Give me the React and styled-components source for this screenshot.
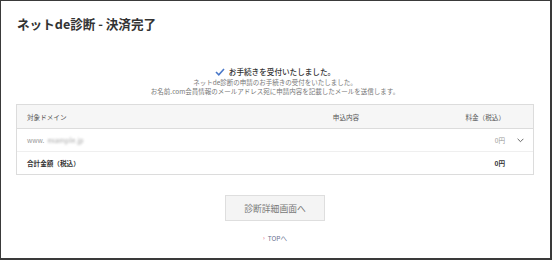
import React from "react";
import styled, { createGlobalStyle } from "styled-components";

const GlobalStyle = createGlobalStyle`
  html, body {
    margin: 0;
    padding: 0;
    background: #fff;
  }
  body {
    font-family: "Noto Sans CJK JP", "Noto Sans", sans-serif;
  }
`;

const Frame = styled.div`
  box-sizing: border-box;
  width: 552px;
  height: 260px;
  border-style: solid;
  border-color: #3a3a3a;
  border-width: 1px 2px 2px 1px;
  padding: 15px 16px 0 15px;
  display: flex;
  flex-direction: column;
  background: #fff;
`;

const Title = styled.h1`
  margin: 0 0 0 1px;
  font-size: 12.6px;
  line-height: 16px;
  font-weight: 700;
  color: #333;
`;

const Done = styled.div`
  margin-top: 35px;
  display: flex;
  justify-content: center;
  align-items: center;
  gap: 4px;
  height: 10px;
  font-size: 7.6px;
  line-height: 10px;
  color: #333;
  font-weight: 500;
`;

const Message = styled.p`
  margin: 1px 0 0;
  text-align: center;
  font-size: 6.5px;
  line-height: 9px;
  color: #777;
`;

const Table = styled.div`
  margin-top: 8px;
  border: 1px solid #dcdcdc;
  display: flex;
  flex-direction: column;
`;

const Row = styled.div`
  display: grid;
  grid-template-columns: 250px 158px 80px 27px;
  align-items: center;
  height: ${(props) => props.height || "22px"};
  background: ${(props) => (props.head ? "#f6f6f6" : "#fff")};
  border-bottom: ${(props) => (props.last ? "none" : "1px solid " + (props.head ? "#dcdcdc" : "#efefef"))};
  font-size: 6.6px;
  color: ${(props) => (props.head ? "#555" : "#999")};
  font-weight: ${(props) => (props.bold ? 700 : 400)};
`;

const Cell = styled.div`
  padding-left: ${(props) => (props.first ? "10px" : "0")};
  text-align: ${(props) => props.align || "start"};
  color: ${(props) => props.color || "inherit"};
  white-space: nowrap;
`;

const Blur = styled.span`
  display: inline-block;
  margin-left: 3px;
  color: #a8a8a8;
  font-size: 7px;
  filter: blur(0.9px);
`;

const Toggle = styled.div`
  display: flex;
  justify-content: center;
  padding-left: 4px;
  color: #666;
`;

const Button = styled.button`
  align-self: center;
  margin-top: 20px;
  width: 100px;
  height: 26px;
  border: 1px solid #dedede;
  background: #f4f4f4;
  color: #777;
  font-family: inherit;
  font-size: 8.8px;
  padding: 0;
  cursor: pointer;
`;

const TopLink = styled.a`
  align-self: center;
  margin-top: 12px;
  font-size: 6.5px;
  line-height: 10px;
  color: #6a7090;
  text-decoration: none;
  display: flex;
  align-items: center;
  gap: 3px;
`;

const Arrow = styled.span`
  color: #e0566a;
  font-size: 6px;
`;

const Check = () => (
  <svg width="10" height="8" viewBox="0 0 10 8">
    <polyline points="1,4 3.8,6.8 9,1" fill="none" stroke="#4a78c8" strokeWidth="1.6" />
  </svg>
);

const Chevron = () => (
  <svg width="7" height="5" viewBox="0 0 7 5">
    <polyline points="0.6,0.8 3.5,3.7 6.4,0.8" fill="none" stroke="#666" strokeWidth="1" />
  </svg>
);

const App = () => {
  return (
    <>
      <GlobalStyle />
      <Frame>
        <Title>ネットde診断 - 決済完了</Title>
        <Done>
          <Check />
          <span>お手続きを受付いたしました。</span>
        </Done>
        <Message>
          ネットde診断の申請のお手続きの受付をいたしました。
          <br />
          お名前.com会員情報のメールアドレス宛に申請内容を記載したメールを送信します。
        </Message>
        <Table>
          <Row head height="23px">
            <Cell first>対象ドメイン</Cell>
            <Cell align="center">申込内容</Cell>
            <Cell align="right">料金（税込）</Cell>
            <Cell />
          </Row>
          <Row>
            <Cell first>
              www.<Blur>example.jp</Blur>
            </Cell>
            <Cell />
            <Cell align="right">0円</Cell>
            <Toggle>
              <Chevron />
            </Toggle>
          </Row>
          <Row bold last>
            <Cell first color="#333">合計金額（税込）</Cell>
            <Cell />
            <Cell align="right" color="#333">0円</Cell>
            <Cell />
          </Row>
        </Table>
        <Button>診断詳細画面へ</Button>
        <TopLink href="#">
          <Arrow>›</Arrow>
          TOPへ
        </TopLink>
      </Frame>
    </>
  );
};

export default App;
